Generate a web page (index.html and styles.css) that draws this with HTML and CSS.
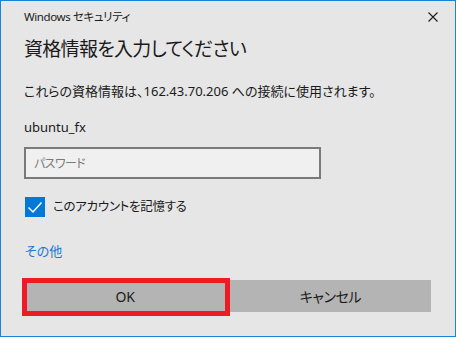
FILE: index.html
```html
<!DOCTYPE html>
<html lang="ja">
<head>
<meta charset="utf-8">
<title>Windows セキュリティ</title>
<link rel="stylesheet" href="styles.css">
</head>
<body>
<div class="window">
  <div class="titlebar">
    <span class="title">Windows セキュリティ</span>
    <svg class="close" width="10" height="10" viewBox="0 0 10 10"><path d="M0.5 0.5 L9.5 9.5 M9.5 0.5 L0.5 9.5" stroke="#1a1a1a" stroke-width="1.1" fill="none"/></svg>
  </div>
  <div class="heading">資格情報を入力してください</div>
  <div class="desc">これらの資格情報は、162.43.70.206 への接続に使用されます。</div>
  <div class="user">ubuntu_fx</div>
  <div class="input"><span class="placeholder">パスワード</span></div>
  <div class="check-row">
    <span class="checkbox"><svg width="20" height="20" viewBox="0 0 20 20"><path d="M3.5 10.5 L8 15 L16.5 5.5" stroke="#fff" stroke-width="1.5" fill="none"/></svg></span>
    <span class="check-label">このアカウントを記憶する</span>
  </div>
  <div class="link">その他</div>
  <div class="buttons">
    <div class="btn ok">OK<span class="highlight"></span></div>
    <div class="btn cancel">キャンセル</div>
  </div>
</div>
</body>
</html>
```
FILE: styles.css
```css
html, body {
  margin: 0;
  padding: 0;
  background: #e6e6e6;
}
.window {
  box-sizing: border-box;
  width: 456px;
  height: 337px;
  border: 1px solid #1883d7;
  background: #e6e6e6;
  padding: 6px 0 0 23px;
  font-family: "Noto Sans", "Noto Sans CJK JP", sans-serif;
  font-feature-settings: "palt";
  color: #1a1a1a;
  display: flex;
  flex-direction: column;
  align-items: flex-start;
}
.titlebar {
  align-self: stretch;
  display: flex;
  justify-content: space-between;
  align-items: center;
  height: 20px;
  padding-right: 17px;
}
.title {
  font-size: 11.5px;
  letter-spacing: -0.4px;
  line-height: 20px;
}
.close {
  display: block;
}
.heading {
  margin-top: 7px;
  font-family: "Noto Sans CJK JP", sans-serif;
  font-size: 19px;
  line-height: 28px;
  letter-spacing: -0.7px;
}
.desc {
  margin-top: 19px;
  font-size: 13px;
  line-height: 20px;
}
.user {
  margin-top: 16px;
  font-size: 13px;
  line-height: 20px;
}
.input {
  margin-top: 10px;
  box-sizing: border-box;
  width: 297px;
  height: 32px;
  border: 2px solid #7a7a7a;
  background: #f0f0f0;
  padding-left: 8px;
  display: flex;
  align-items: center;
}
.placeholder {
  color: #7a7a7a;
  font-size: 12px;
  letter-spacing: -0.6px;
}
.check-row {
  margin-top: 18px;
  display: flex;
  align-items: center;
  height: 20px;
  margin-left: 1px;
}
.checkbox {
  width: 20px;
  height: 20px;
  background: #0078d7;
  display: block;
}
.checkbox svg {
  display: block;
}
.check-label {
  margin-left: 8px;
  font-size: 12.5px;
  letter-spacing: -0.3px;
  line-height: 20px;
}
.link {
  margin-top: 24px;
  margin-left: 1px;
  color: #1a78d0;
  font-size: 13px;
  line-height: 20px;
}
.buttons {
  margin-top: 19px;
  display: flex;
  gap: 4px;
}
.btn {
  position: relative;
  height: 32px;
  background: #b4b4b4;
  display: flex;
  align-items: center;
  justify-content: center;
  font-size: 14px;
  letter-spacing: -0.4px;
}
.ok {
  width: 202px;
}
.cancel {
  width: 201px;
}
.highlight {
  position: absolute;
  left: -2px;
  top: -2px;
  right: -4px;
  bottom: -4px;
  border: 5px solid #ed1c24;
}
```
